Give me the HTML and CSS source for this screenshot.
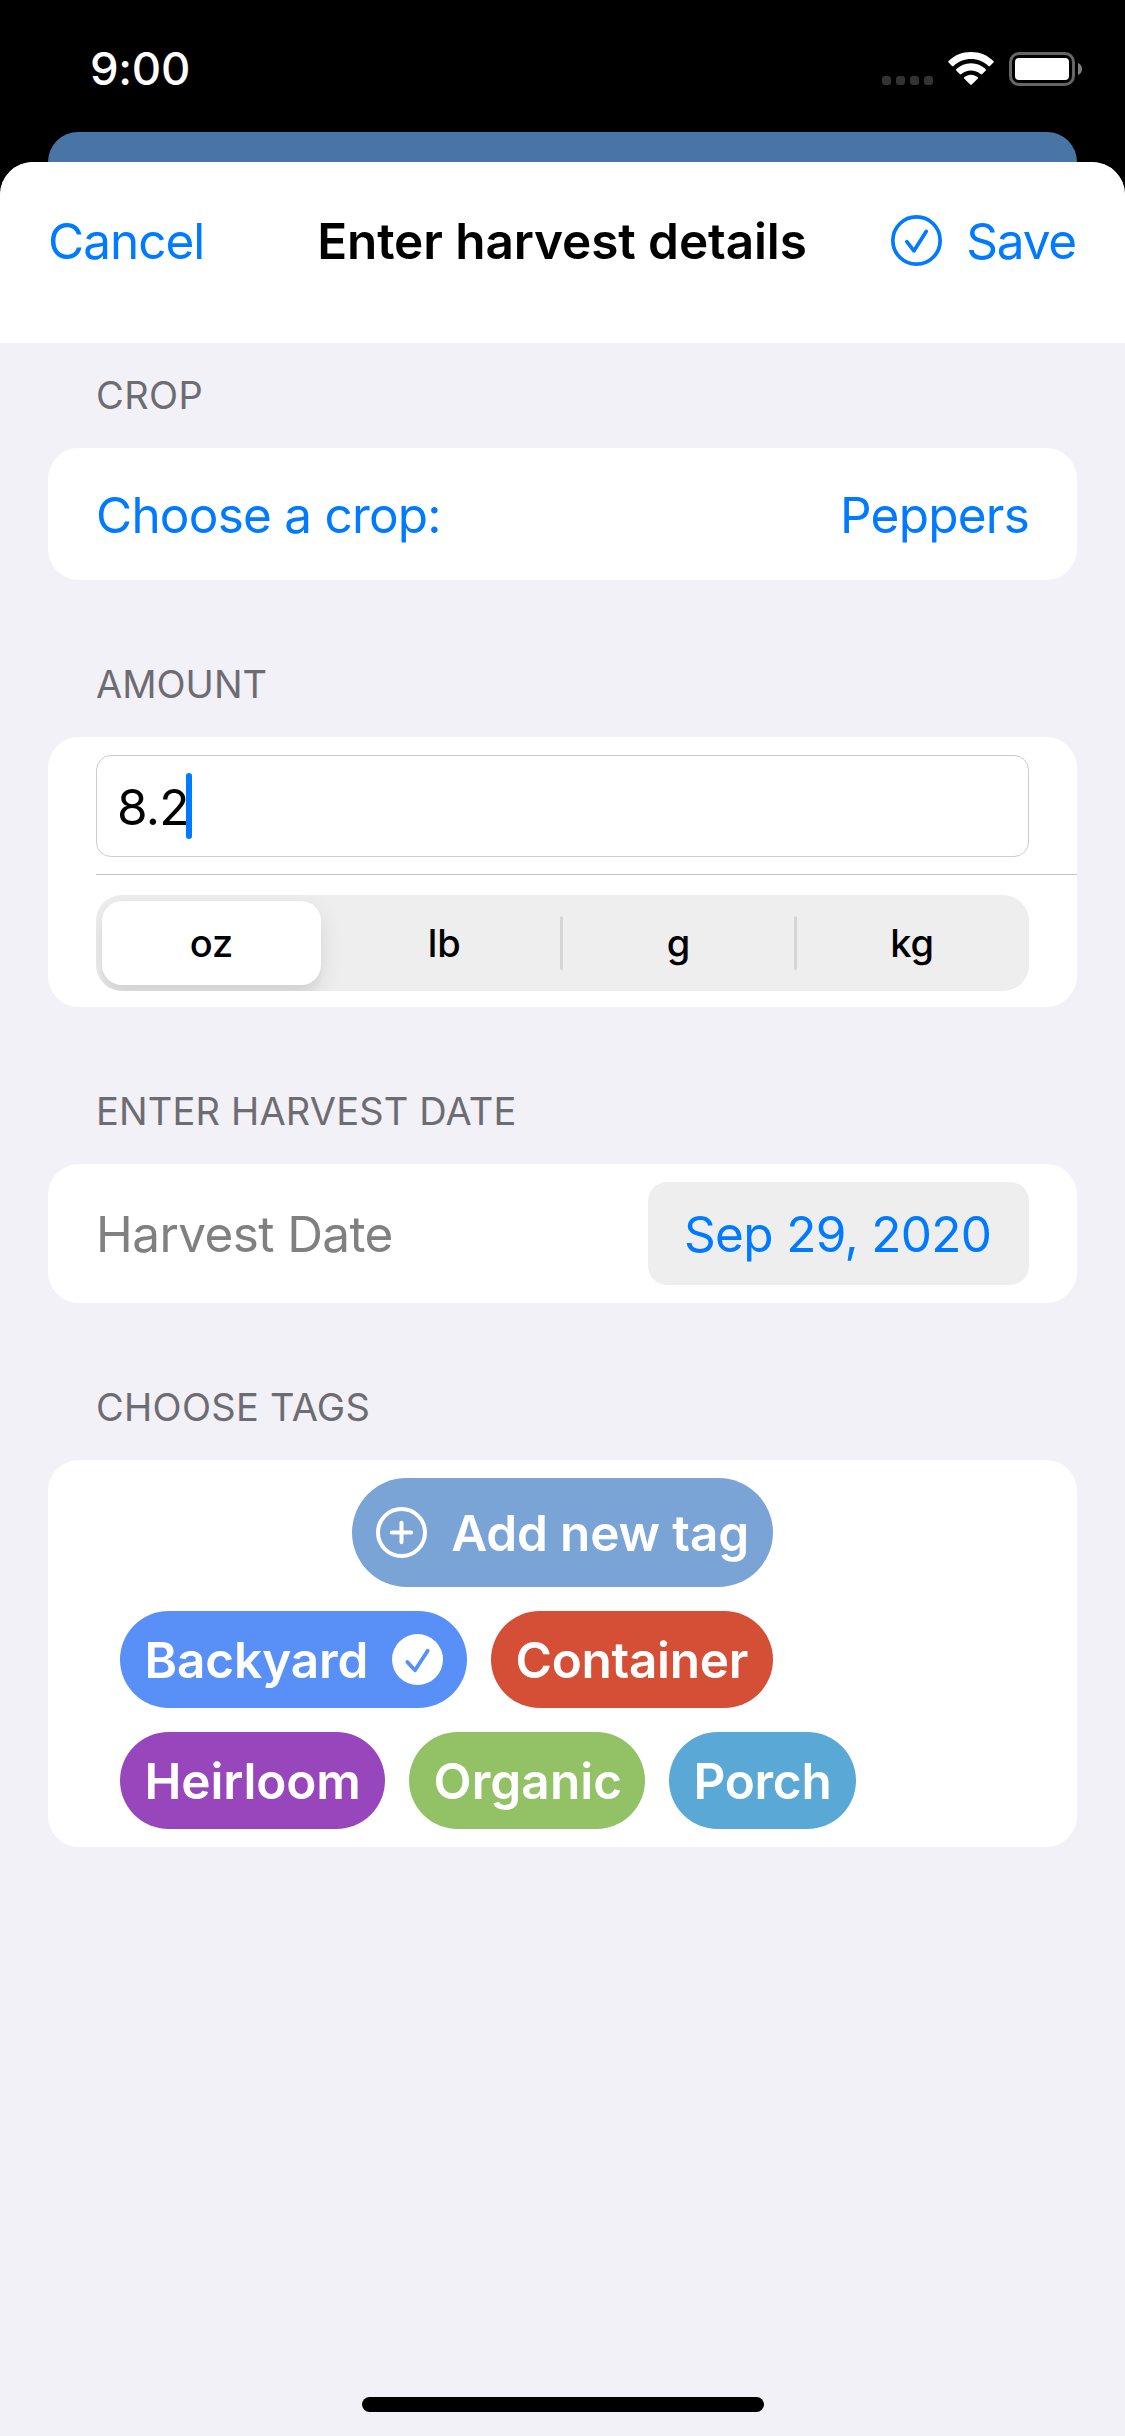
FILE: index.html
```html
<!DOCTYPE html>
<html lang="en">
<head>
<meta charset="utf-8">
<title>Enter harvest details</title>
<link rel="stylesheet" href="styles.css">
</head>
<body>
<div class="status-bar">
  <span class="clock">9:00</span>
  <div class="status-icons">
    <svg class="signal" width="51" height="9" viewBox="0 0 51 9" fill="#333"><rect width="9" height="9" rx="3"/><rect x="14" width="9" height="9" rx="3"/><rect x="28" width="9" height="9" rx="3"/><rect x="42" width="9" height="9" rx="3"/></svg>
    <svg class="wifi" width="46" height="33" viewBox="0 0 46 33" fill="#fff"><path d="M23 0C31.8 0 39.6 3.3 45.4 8.9Q46.2 9.7 45.4 10.5L42 13.9Q41.2 14.7 40.4 13.9C35.6 9.5 29.6 7 23 7S10.400 9.500 5.600 13.900Q4.800 14.700 4 13.900L.6 10.500Q-.2 9.700.6 8.900C6.400 3.300 14.200 0 23 0Z"/><path d="M23 11.300C28.700 11.300 33.800 13.500 37.600 17.100Q38.400 17.900 37.600 18.700L34.200 22.100Q33.400 22.900 32.600 22.100C29.900 19.800 26.600 18.500 23 18.500S16.100 19.800 13.400 22.100Q12.600 22.900 11.800 22.100L8.400 18.700Q7.600 17.900 8.400 17.100C12.200 13.500 17.300 11.300 23 11.300Z"/><path d="M23 22.700C25.400 22.700 27.800 23.600 29.600 25.100Q30.400 25.900 29.600 26.700L23.800 32.400Q23 33.200 22.200 32.400L16.400 26.700Q15.600 25.900 16.400 25.100C18.200 23.600 20.600 22.700 23 22.700Z"/></svg>
    <svg width="73" height="34" viewBox="0 0 73 34"><rect x="1.500" y="1.500" width="63" height="31" rx="8.500" fill="none" stroke="#666" stroke-width="3"/><rect x="6" y="6" width="54" height="22" rx="4" fill="#fff"/><path d="M69 11C71.500 12 73 14.300 73 17S71.500 22 69 23Z" fill="#808080"/></svg>
  </div>
</div>
<div class="back-sheet"></div>
<main class="sheet">
  <header class="nav">
    <span class="nav-cancel">Cancel</span>
    <h1 class="nav-title">Enter harvest details</h1>
    <span class="nav-save">
      <svg width="51" height="51" viewBox="0 0 51 51" fill="none" stroke="#007aff" stroke-width="3.700"><circle cx="25.500" cy="25.500" r="23.650"/><path d="M15.800 26.700L23 35.800L35.200 16.400" stroke-linecap="round" stroke-linejoin="round"/></svg>
      <span>Save</span>
    </span>
  </header>

  <section>
    <h2 class="label label-first">CROP</h2>
    <div class="card crop-row"><span>Choose a crop:</span><span>Peppers</span></div>
  </section>

  <section class="section">
    <h2 class="label">AMOUNT</h2>
    <div class="card amount">
      <div class="field"><span class="field-value">8.2</span><span class="caret"></span></div>
      <div class="separator"></div>
      <div class="segments">
        <span class="segment selected">oz</span>
        <span class="segment">lb</span>
        <i class="divider"></i>
        <span class="segment">g</span>
        <i class="divider"></i>
        <span class="segment">kg</span>
      </div>
    </div>
  </section>

  <section class="section">
    <h2 class="label label-date">ENTER HARVEST DATE</h2>
    <div class="card date-row"><span class="date-name">Harvest Date</span><span class="date-value">Sep 29, 2020</span></div>
  </section>

  <section class="section">
    <h2 class="label label-tags">CHOOSE TAGS</h2>
    <div class="card tags">
      <div class="tag add">
        <svg width="51" height="51" viewBox="0 0 51 51" fill="none" stroke="#fff" stroke-width="4"><circle cx="25.500" cy="25.500" r="23.500"/><path d="M15.800 25.500H35.200M25.500 15.800V35.200" stroke-linecap="round"/></svg>
        <span>Add new tag</span>
      </div>
      <div class="tag-line">
        <div class="tag backyard"><span>Backyard</span>
          <svg width="51" height="51" viewBox="0 0 51 51"><circle cx="25.500" cy="25.500" r="25.500" fill="#fff"/><path d="M15.300 28L23 36.300L35.700 16.800" fill="none" stroke="#5890f7" stroke-width="3.800" stroke-linecap="round" stroke-linejoin="round"/></svg>
        </div>
        <div class="tag container">Container</div>
      </div>
      <div class="tag-line">
        <div class="tag heirloom">Heirloom</div>
        <div class="tag organic">Organic</div>
        <div class="tag porch">Porch</div>
      </div>
    </div>
  </section>
  <div class="home-indicator"></div>
</main>
</body>
</html>
```

FILE: styles.css
```css
* { box-sizing: border-box; }

body {
  margin: 0;
  width: 1125px;
  height: 2436px;
  display: flex;
  flex-direction: column;
  background: #000;
  font-family: Inter, "Liberation Sans", sans-serif;
  font-size: 49.5px;
  line-height: 60px;
  letter-spacing: -0.78px;
  white-space: nowrap;
  overflow: hidden;
}

h1, h2 { margin: 0; font-size: inherit; }
svg { display: block; flex: none; }

.status-bar {
  height: 132px;
  padding: 39px 43px 0 90px;
  display: flex;
  justify-content: space-between;
  align-items: flex-start;
  color: #fff;
}
.clock { font-size: 45.5px; font-weight: 500; letter-spacing: -0.3px; }
.status-icons { display: flex; align-items: flex-end; gap: 15px; padding-top: 13px; }
.signal, .wifi { margin-bottom: 1px; }

.back-sheet {
  height: 30px;
  margin: 0 48px;
  background: #4874a6;
  border-radius: 31px 31px 0 0;
}

.sheet {
  flex: 1;
  display: flex;
  flex-direction: column;
  background: #f2f1f7;
  border-radius: 33px 33px 0 0;
  overflow: hidden;
}
.nav {
  height: 181px;
  padding: 0 49px 24px 48px;
  display: grid;
  grid-template-columns: 1fr auto 1fr;
  align-items: center;
  background: #fff;
  color: #007aff;
  letter-spacing: -1px;
}
.nav-title { color: #000; font-weight: 600; letter-spacing: -0.1px; }
.nav-save { display: flex; align-items: center; justify-content: flex-end; gap: 24px; letter-spacing: -1.2px; }

.section { margin-top: 51px; }
.label {
  height: 106px;
  padding-left: 96px;
  font-size: 38px;
  font-weight: 400;
  line-height: 106px;
  letter-spacing: 0;
  color: #6d6c72;
}
.label-first { height: 105px; line-height: 104px; letter-spacing: 0.4px; }
.label-date { letter-spacing: 0.17px; }
.label-tags { letter-spacing: 0.29px; }

.card {
  margin: 0 48px;
  background: #fff;
  border-radius: 31px;
}
.crop-row {
  height: 132px;
  padding: 1px 48px 0;
  display: flex;
  justify-content: space-between;
  align-items: center;
  color: #007aff;
}

.amount { height: 270px; padding: 18px 0 0 48px; }
.field {
  width: 933px;
  height: 102px;
  padding-left: 20px;
  display: flex;
  align-items: center;
  border: 1px solid #ccc;
  border-radius: 15px;
}
.field-value { width: 69px; padding-top: 2px; }
.caret { width: 6px; height: 66px; border-radius: 3px; background: #007aff; z-index: 1; }
.separator { height: 1px; margin-top: 17px; background: #c6c6c8; }
.segments {
  width: 933px;
  height: 96px;
  margin-top: 20px;
  display: flex;
  align-items: center;
  background: #eee;
  border-radius: 26px;
  overflow: hidden;
  font-size: 38px;
  font-weight: 450;
  letter-spacing: 0;
}
.segment { width: 234px; text-align: center; }
.segment:nth-child(2) { width: 233px; padding-right: 2px; }
.selected {
  flex: none;
  width: 219px;
  height: 84px;
  margin: 0 8px 0 6px;
  line-height: 84px;
  font-weight: 500;
  background: #fff;
  border-radius: 20px;
  box-shadow: 0 9px 24px rgba(0, 0, 0, 0.1), 0 9px 3px rgba(0, 0, 0, 0.03);
}
.divider { width: 3px; height: 54px; margin: 0 -1.5px; background: #d5d5d6; border-radius: 2px; }

.date-row {
  height: 139px;
  padding: 0 48px;
  display: flex;
  justify-content: space-between;
  align-items: center;
}
.date-name { color: #808080; letter-spacing: -0.6px; }
.date-value {
  width: 381px;
  height: 103px;
  padding-left: 36px;
  line-height: 104px;
  letter-spacing: -0.68px;
  color: #007aff;
  background: #eee;
  border-radius: 19px;
}

.tags {
  height: 387px;
  padding: 18px 72px 0;
  display: flex;
  flex-direction: column;
  gap: 24px;
}
.tag-line { display: flex; gap: 24px; }
.tag {
  height: 97px;
  padding: 0 24px 0 24.5px;
  display: flex;
  align-items: center;
  justify-content: space-between;
  border-radius: 49px;
  color: #fff;
  font-weight: 600;
  letter-spacing: -0.15px;
}
.add { width: 421px; height: 109px; padding-left: 24px; align-self: center; background: #7aa3d6; border-radius: 55px; }
.backyard { width: 347px; background: #5890f7; }
.container { width: 282px; background: #d54e36; letter-spacing: -0.3px; }
.heirloom { width: 265px; background: #9846bb; }
.organic { width: 236px; background: #92c166; letter-spacing: 0.1px; }
.porch { width: 187px; background: #59a8d6; letter-spacing: -0.3px; }

.home-indicator {
  width: 402px;
  height: 15px;
  margin: auto auto 24px;
  background: #000;
  border-radius: 8px;
}
```
